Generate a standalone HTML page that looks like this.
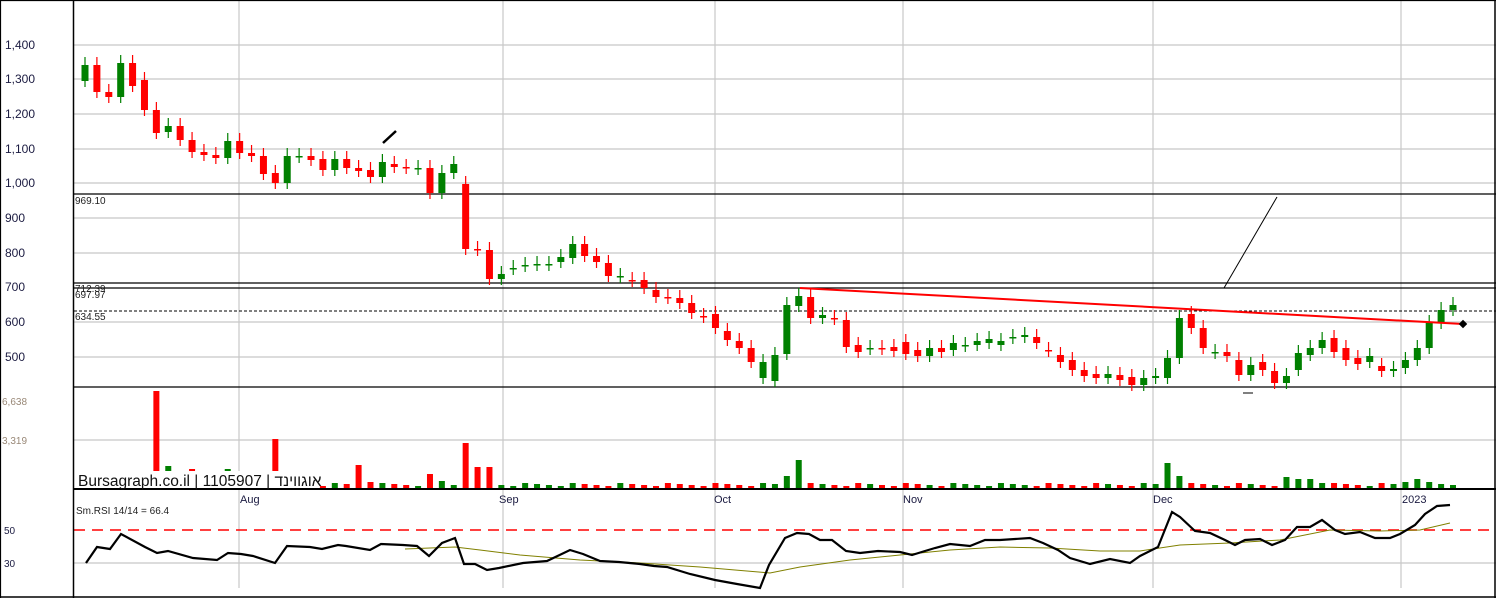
<!DOCTYPE html>
<html><head><meta charset="utf-8"><style>
html,body{margin:0;padding:0;background:#fff;width:1496px;height:598px;overflow:hidden}
svg{display:block}
text{font-family:"Liberation Sans",sans-serif;font-size:11px}
</style></head><body>
<svg id="s" width="1496" height="598" xmlns="http://www.w3.org/2000/svg">
<rect x="0" y="0" width="1496" height="598" fill="#fff"/>
<g stroke="#c8c8c8" stroke-width="1.2">
<line x1="74" y1="45" x2="1496" y2="45"/><line x1="74" y1="79" x2="1496" y2="79"/>
<line x1="74" y1="114" x2="1496" y2="114"/><line x1="74" y1="149" x2="1496" y2="149"/>
<line x1="74" y1="183" x2="1496" y2="183"/><line x1="74" y1="218" x2="1496" y2="218"/>
<line x1="74" y1="253" x2="1496" y2="253"/><line x1="74" y1="322" x2="1496" y2="322"/>
<line x1="74" y1="357" x2="1496" y2="357"/><line x1="74" y1="440" x2="1496" y2="440"/>
<line x1="74" y1="563" x2="1496" y2="563"/>
<line x1="239" y1="0" x2="239" y2="588"/><line x1="503" y1="0" x2="503" y2="588"/>
<line x1="715" y1="0" x2="715" y2="588"/><line x1="903" y1="0" x2="903" y2="588"/>
<line x1="1153" y1="0" x2="1153" y2="588"/><line x1="1401" y1="0" x2="1401" y2="588"/>
</g>
<line x1="74" y1="530" x2="1496" y2="530" stroke="#f00" stroke-width="1.5" stroke-dasharray="11,7"/>
<g stroke="#000" stroke-width="1.2">
<line x1="74" y1="194" x2="1496" y2="194"/><line x1="74" y1="283" x2="1496" y2="283"/>
<line x1="74" y1="288" x2="1496" y2="288"/><line x1="74" y1="387" x2="1496" y2="387"/>
<line x1="74" y1="489" x2="1496" y2="489" stroke-width="2"/>
<line x1="73.5" y1="0" x2="73.5" y2="598" stroke-width="1.5"/>
<line x1="1495" y1="0" x2="1495" y2="598" stroke-width="1.5"/>
<line x1="0" y1="597" x2="1496" y2="597" stroke-width="1.5"/>
<line x1="0.5" y1="0" x2="0.5" y2="598"/><line x1="0" y1="0.5" x2="1496" y2="0.5"/>
</g>
<line x1="74" y1="311" x2="1496" y2="311" stroke="#000" stroke-dasharray="3,2"/>
<g id="c"></g>
<line x1="800" y1="288" x2="1463" y2="324" stroke="#f00" stroke-width="2"/>
<rect x="1460" y="321" width="6" height="6" transform="rotate(45 1463 324)" fill="#000"/>
<line x1="1224" y1="288" x2="1277" y2="197" stroke="#000" stroke-width="1"/>
<line x1="383" y1="143" x2="396" y2="131" stroke="#000" stroke-width="2.5"/>
<line x1="1243" y1="393" x2="1253" y2="393" stroke="#000"/>
<g fill="#1a1a40">
<text x="5" y="49" style="font-size:12px">1,400</text><text x="5" y="83" style="font-size:12px">1,300</text><text x="5" y="118" style="font-size:12px">1,200</text>
<text x="5" y="153" style="font-size:12px">1,100</text><text x="5" y="187" style="font-size:12px">1,000</text><text x="5" y="222" style="font-size:12px">900</text>
<text x="5" y="257" style="font-size:12px">800</text><text x="5" y="291" style="font-size:12px">700</text><text x="5" y="326" style="font-size:12px">600</text>
<text x="5" y="361" style="font-size:12px">500</text>
<text x="4" y="534" style="font-size:10px">50</text><text x="4" y="567" style="font-size:10px">30</text>
</g>
<g fill="#998877"><text x="2" y="405" style="font-size:10px">6,638</text><text x="2" y="444" style="font-size:10px">3,319</text></g>
<g fill="#222"><text x="75" y="204" style="font-size:10px">969.10</text>
<text x="75" y="292" style="font-size:10px">712.39</text><text x="75" y="298" style="font-size:10px">697.97</text>
<text x="75" y="320" style="font-size:10px">634.55</text>
<text x="76" y="514" style="font-size:10px">Sm.RSI 14/14 = 66.4</text></g>
<g fill="#1a1a40"><text x="240" y="503">Aug</text><text x="499" y="503">Sep</text><text x="714" y="503">Oct</text>
<text x="903" y="503">Nov</text><text x="1153" y="503">Dec</text><text x="1402" y="503">2023</text></g>
<g id="w"><rect x="76" y="471" width="240" height="17" fill="#fff"/>
<text x="78" y="486" style="font-size:15.5px;font-family:'Liberation Sans','Noto Sans CJK SC',sans-serif" fill="#111">Bursagraph.co.il | 1105907 | אוגווינד</text></g>
<polyline fill="none" stroke="#808000" stroke-width="1" points="405,549 430,548 455,547 480,550 520,555 580,560 640,563 700,567 735,570 770,573 800,567 850,560 900,555 950,550 1000,547 1050,548 1100,551 1140,551 1180,545 1230,543 1280,540 1330,530 1380,531 1420,530 1450,523"/>
<polyline fill="none" stroke="#000" stroke-width="2.2" points="86,563 97,547 110,549 121,534 145,547 157,553 168,551 193,558 217,560 228,553 241,554 253,556 275,563 287,546 310,547 322,549 338,545 346,546 370,550 381,544 403,545 417,546 429,556 442,543 455,538 464,564 475,564 487,570 499,568 523,563 547,561 570,550 583,554 600,561 619,562 640,564 654,566 667,567 690,574 715,580 737,584 760,588 769,565 785,538 797,533 809,534 820,540 832,540 846,551 860,553 878,551 900,552 912,555 925,551 935,548 950,544 970,546 985,540 1000,540 1030,538 1043,543 1058,550 1070,558 1090,564 1110,559 1130,563 1140,556 1158,547 1172,512 1180,517 1195,531 1210,533 1225,540 1235,545 1245,540 1260,539 1272,545 1285,540 1297,527 1310,527 1322,520 1335,530 1345,534 1360,532 1375,538 1390,538 1400,534 1415,525 1425,514 1437,506 1450,505"/>
</svg>
<script>
(function(){
var NS="http://www.w3.org/2000/svg";
var D=[['g',65,81],['r',65,92],['r',92,97],['g',63,97],['r',63,86],['r',80,110],['r',110,133],['g',126,132],['r',126,140],['r',140,152],['r',152,155],['r',155,158],['g',141,158],['r',141,153],['r',153,156],['r',156,174],['r',173,183],['g',156,183],['g',156,157],['r',156,160],['r',159,170],['g',159,170],['r',159,168],['r',168,171],['r',170,177],['g',162,177],['r',164,167],['r',167,168],['g',168,169],['r',168,193],['g',173,193],['g',164,173],['r',184,249],['r',249,250],['r',250,279],['g',274,279],['g',268,269],['g',265,266],['g',264,265],['g',264,265],['g',257,262],['g',244,258],['r',244,256],['r',256,262],['r',263,276],['g',276,277],['r',280,281],['r',280,288],['r',290,297],['r',297,298],['r',298,303],['r',303,313],['r',316,317],['r',314,328],['r',331,340],['r',341,348],['r',348,362],['g',362,378],['g',355,381],['g',305,354],['g',296,306],['r',297,318],['g',315,318],['r',318,319],['r',320,347],['r',345,352],['g',348,349],['r',348,349],['r',347,351],['r',342,354],['r',350,356],['g',348,356],['r',348,352],['g',343,350],['g',345,346],['g',341,345],['g',339,343],['g',341,345],['g',337,338],['g',335,337],['r',337,343],['r',350,351],['r',355,362],['r',360,370],['r',370,376],['r',374,378],['g',374,378],['r',375,380],['r',377,385],['g',378,385],['g',376,378],['g',358,378],['g',318,358],['r',314,328],['r',328,348],['g',352,353],['r',352,356],['r',360,375],['g',365,375],['r',362,370],['r',371,383],['g',376,383],['g',353,370],['g',348,355],['g',340,348],['r',338,352],['r',348,360],['r',358,364],['g',356,362],['r',366,371],['g',369,371],['g',360,368],['g',348,360],['g',323,348],['g',310,323],['g',305,310]];
var V={6:391,7:466,9:469,12:469,16:439,23:465,24:482,29:474,30:481,32:443,33:467,34:467,59:476,60:460,91:463,92:476,101:477,102:479,103:479,104:483,111:482,112:479,113:482};
var g=document.getElementById('c'),n=D.length;
function el(tag,a){var e=document.createElementNS(NS,tag);for(var k in a)e.setAttribute(k,a[k]);g.appendChild(e);}
for(var i=0;i<n;i++){var d=D[i],x=85+i*(1453-85)/(n-1),col=d[0]=='g'?'#008000':'#ff0000';
var t=d[1],b=d[2];
el('line',{x1:x,y1:t-8,x2:x,y2:b+6,stroke:col,'stroke-width':1.2});
el('rect',{x:x-3.5,y:t,width:7,height:Math.max(b-t,1.5),fill:col});
var vt=V[i]||(488-2-((i*7)%4));
el('rect',{x:x-3,y:vt,width:6,height:488-vt,fill:col});}
var w=document.getElementById('w');w.parentNode.appendChild(w);
})();
</script>
</body></html>
